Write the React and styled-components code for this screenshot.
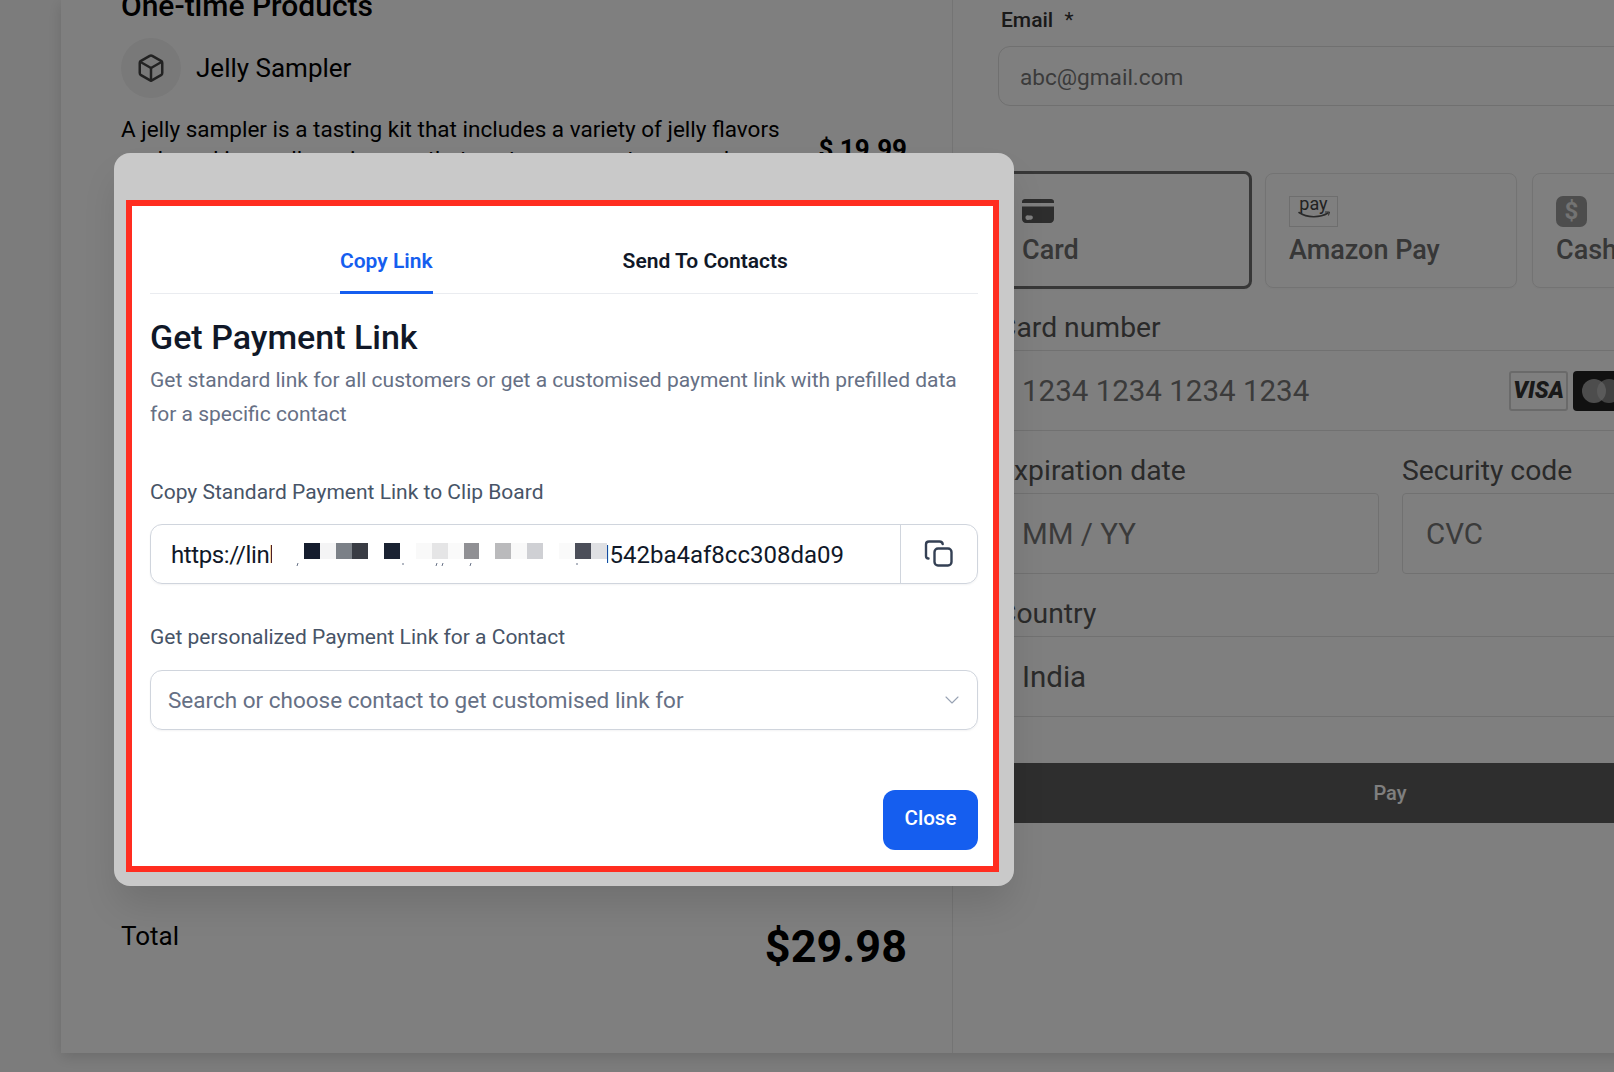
import styled, { createGlobalStyle } from 'styled-components'
import { Box, ChevronDown } from 'lucide-react'

const MOSAIC = [
	'#151d2e', '#f4f4f5', '#7b8087', '#393c44', '#ffffff', '#1a2232', '#ffffff', '#f9f9f9', '#e5e5e6',
	'#fafafa', '#909094', '#ffffff', '#bababc', '#f9f9f9', '#cfd0d4', '#ffffff', '#fafafa', '#4b4e59', '#dfe0e3',
]

const App = () => (
	<>
		<GlobalStyle />
		<Page>
			<Sheet>
				<ProductsColumn>
					<SectionTitle>One-time Products</SectionTitle>
					<ProductRow>
						<ProductBadge><Box size={30} strokeWidth={2} /></ProductBadge>
						<ProductName>Jelly Sampler</ProductName>
					</ProductRow>
					<ProductBody>
						<ProductText>
							A jelly sampler is a tasting kit that includes a variety of jelly flavors
							packaged in small servings so that customers can try several new ones
						</ProductText>
						<ProductPrice>$ 19.99</ProductPrice>
					</ProductBody>
					<TotalRow>
						<TotalLabel>Total</TotalLabel>
						<TotalValue>$29.98</TotalValue>
					</TotalRow>
				</ProductsColumn>

				<CheckoutColumn>
					<EmailLabel>Email <Star>*</Star></EmailLabel>
					<EmailInput>abc@gmail.com</EmailInput>

					<MethodRow>
						<MethodCard $active>
							<CardIcon />
							<MethodName>Card</MethodName>
						</MethodCard>
						<MethodCard>
							<AmazonMark>
								<AmazonText>pay</AmazonText>
								<svg width="34" height="8" viewBox="0 0 34 8" fill="none">
									<path d="M2 1.5c8 5.5 21 5.5 29 .5" stroke="#555" strokeWidth="1.6" strokeLinecap="round" />
									<path d="M28 1h4.5l-1 3.5" stroke="#555" strokeWidth="1" />
								</svg>
							</AmazonMark>
							<MethodName>Amazon Pay</MethodName>
						</MethodCard>
						<MethodCard>
							<CashMark>$</CashMark>
							<MethodName>Cash</MethodName>
						</MethodCard>
					</MethodRow>

					<FieldLabel>Card number</FieldLabel>
					<StripeField>
						<FieldValue>1234 1234 1234 1234</FieldValue>
						<BrandRow>
							<VisaMark>VISA</VisaMark>
							<MasterMark>
								<svg width="60" height="40" viewBox="0 0 60 40">
									<circle cx="21" cy="20" r="12" fill="#c4c4c4" opacity="0.75" />
									<circle cx="36" cy="20" r="12" fill="#c4c4c4" opacity="0.6" />
								</svg>
							</MasterMark>
						</BrandRow>
					</StripeField>

					<SplitRow>
						<div>
							<FieldLabel>Expiration date</FieldLabel>
							<StripeField $boxed><FieldValue>MM / YY</FieldValue></StripeField>
						</div>
						<div>
							<FieldLabel>Security code</FieldLabel>
							<StripeField $boxed><FieldValue>CVC</FieldValue></StripeField>
						</div>
					</SplitRow>

					<FieldLabel>Country</FieldLabel>
					<StripeField><CountryValue>India</CountryValue></StripeField>

					<PayButton>Pay</PayButton>
				</CheckoutColumn>
			</Sheet>

			<Backdrop />

			<Modal>
				<Highlight>
					<Tabs>
						<Tab $active>Copy Link</Tab>
						<Tab>Send To Contacts</Tab>
					</Tabs>

					<Title>Get Payment Link</Title>
					<Description>
						Get standard link for all customers or get a customised payment link with prefilled data
						for a specific contact
					</Description>

					<LinkLabel>Copy Standard Payment Link to Clip Board</LinkLabel>
					<LinkField>
						<LinkText>
							<LinkHead>https://link</LinkHead>
							<span>l542ba4af8cc308da09</span>
						</LinkText>
						<LinkMask>
							<Mosaic>
								{MOSAIC.map((color, index) => <MosaicCell key={index} $color={color} />)}
							</Mosaic>
							<svg width="335" height="5" viewBox="0 0 335 5" stroke="#667085" strokeWidth="1">
								<path d="M26 1l-1 3M131 1v2M165 1l-1 3M171 1l-1 3M199 1l-1 3M305 1v2" />
							</svg>
						</LinkMask>
						<CopyButton>
							<svg width="32" height="32" viewBox="0 0 32 32" fill="none" stroke="#344054" strokeWidth="2.4" strokeLinecap="round">
								<rect x="11.5" y="10.5" width="17" height="17" rx="3.5" />
								<path d="M5.5 20.5C3.8 20.5 3 19.5 3 18V6.5C3 4.5 4 3.5 6 3.5h10.5c2 0 3 .8 3.2 2.6" />
							</svg>
						</CopyButton>
					</LinkField>

					<ContactLabel>Get personalized Payment Link for a Contact</ContactLabel>
					<ContactSelect>
						<span>Search or choose contact to get customised link for</span>
						<ChevronDown size={24} strokeWidth={1.1} color="#98a2b3" />
					</ContactSelect>

					<Footer>
						<CloseButton>Close</CloseButton>
					</Footer>
				</Highlight>
			</Modal>
		</Page>
	</>
)


export default App


const CardIcon = () => (
	<svg width="32" height="24" viewBox="0 0 32 24" fill="#5a5a5a">
		<path d="M3 0h26c1.7 0 3 1.2 3 2.6V4H0V2.6C0 1.2 1.3 0 3 0z" />
		<path d="M0 7.5h32V20c0 2.2-1.600 4-4 4H4c-2.400 0-4-1.800-4-4V7.500zm7 9a2.400 2.400 0 100 4.200h1a2.200 2.200 0 100-4.200H7z" fillRule="evenodd" />
	</svg>
)

const GlobalStyle = createGlobalStyle`
	* {
		box-sizing: border-box;
	}

	body {
		margin: 0;
		font-family: Roboto, "Liberation Sans", sans-serif;
	}
`

const Page = styled.div`
	position: relative;
	width: 1614px;
	height: 1072px;
	overflow: hidden;
	background: #f9f9f9;
`

const Sheet = styled.div`
	width: 1700px;
	height: 1053px;
	margin-left: 61px;
	display: flex;
	background: #ffffff;
	box-shadow: 0 4px 14px rgba(0, 0, 0, 0.14);
`

const ProductsColumn = styled.div`
	width: 892px;
	padding: 0 45px 0 60px;
	border-right: 1px solid #e8e8e8;
	display: flex;
	flex-direction: column;
	flex-shrink: 0;
`

const SectionTitle = styled.h2`
	margin: -10px 0 0;
	font-size: 30px;
	line-height: 32px;
	font-weight: 500;
	color: #000000;
`

const ProductRow = styled.div`
	margin-top: 16px;
	display: flex;
	align-items: center;
	gap: 15px;
`

const ProductBadge = styled.div`
	width: 60px;
	height: 60px;
	border-radius: 50%;
	background: #f2f2f2;
	color: #444444;
	display: flex;
	align-items: center;
	justify-content: center;
`

const ProductName = styled.span`
	font-size: 26px;
	color: #000000;
`

const ProductBody = styled.div`
	margin-top: 16px;
	display: flex;
	align-items: flex-start;
	justify-content: space-between;
`

const ProductText = styled.p`
	width: 670px;
	margin: 0;
	font-size: 22.5px;
	line-height: 30px;
	color: #000000;
`

const ProductPrice = styled.span`
	margin-top: 20px;
	font-size: 26px;
	line-height: 30px;
	font-weight: 700;
	color: #000000;
`

const TotalRow = styled.div`
	margin-top: 716px;
	display: flex;
	justify-content: space-between;
`

const TotalLabel = styled.span`
	font-size: 26px;
	line-height: 32px;
	color: #000000;
`

const TotalValue = styled.span`
	font-size: 45px;
	line-height: 54px;
	font-weight: 700;
	color: #000000;
`

const CheckoutColumn = styled.div`
	width: 784px;
	margin-left: 45px;
	padding-top: 7px;
	flex-shrink: 0;
`

const EmailLabel = styled.div`
	padding-left: 3px;
	font-size: 21px;
	line-height: 26px;
	font-weight: 500;
	color: #333333;
`

const Star = styled.span`
	margin-left: 6px;
	font-weight: 400;
`

const EmailInput = styled.div`
	height: 60px;
	margin-top: 13px;
	padding: 2px 0 0 21px;
	border: 1px solid #e0e0e0;
	border-radius: 12px;
	display: flex;
	align-items: center;
	font-size: 22.6px;
	color: #777777;
`

const MethodRow = styled.div`
	margin: 65px 0 -1px;
	display: flex;
	align-items: center;
	gap: 15px;
`

const MethodCard = styled.div`
	width: ${({ $active }) => ($active ? '254px' : '252px')};
	height: ${({ $active }) => ($active ? '118px' : '115px')};
	margin-right: ${({ $active }) => ($active ? '-2px' : '0')};
	padding: ${({ $active }) => ($active ? '25px 21px' : '22px 23px')};
	border: ${({ $active }) => ($active ? '3px solid #6e6e6e' : '1px solid #e6e6e6')};
	border-radius: 8px;
	flex-shrink: 0;
	box-shadow: 0 1px 2px rgba(0, 0, 0, 0.03);
`

const MethodName = styled.div`
	margin-top: 6px;
	font-size: 27px;
	line-height: 34px;
	font-weight: 500;
	color: #6e6e6e;
`

const AmazonMark = styled.div`
	width: 49px;
	height: 31px;
	border: 1px solid #dddddd;
	display: flex;
	flex-direction: column;
	align-items: center;
`

const AmazonText = styled.span`
	font-size: 18px;
	line-height: 14px;
	color: #444444;
`

const CashMark = styled.div`
	width: 31px;
	height: 31px;
	border-radius: 7px;
	background: #9a9a9a;
	color: #e6e6e6;
	display: flex;
	align-items: center;
	justify-content: center;
	font-size: 24px;
	font-weight: 700;
`

const FieldLabel = styled.div`
	margin-top: 22px;
	font-size: 28.3px;
	line-height: 36px;
	color: #555555;
`

const StripeField = styled.div`
	height: 81px;
	margin-top: 4px;
	padding: 0 24px 0 ${({ $boxed }) => ($boxed ? '23px' : '24px')};
	border-top: 1px solid #e2e2e2;
	border-bottom: 1px solid #e2e2e2;
	border-left: ${({ $boxed }) => ($boxed ? '1px solid #e2e2e2' : 'none')};
	border-right: ${({ $boxed }) => ($boxed ? '1px solid #e2e2e2' : 'none')};
	border-radius: ${({ $boxed }) => ($boxed ? '4px' : '0')};
	display: flex;
	align-items: center;
	justify-content: space-between;
	font-size: 29.5px;
`

const FieldValue = styled.span`
	color: #777777;
`

const CountryValue = styled.span`
	color: #555555;
`

const BrandRow = styled.div`
	display: flex;
	gap: 5px;
	margin-right: 125px;
`

const VisaMark = styled.div`
	width: 59px;
	height: 40px;
	border: 2px solid #d4d4d4;
	border-radius: 3px;
	display: flex;
	align-items: center;
	justify-content: center;
	font-size: 23px;
	font-weight: 900;
	font-style: italic;
	color: #333333;
`

const MasterMark = styled.div`
	width: 60px;
	height: 40px;
	border-radius: 4px;
	background: #222222;
	display: flex;
`

const SplitRow = styled.div`
	display: grid;
	grid-template-columns: 381px 381px;
	gap: 23px;
`

const PayButton = styled.div`
	height: 60px;
	margin-top: 46px;
	background: #5c5c5c;
	display: flex;
	align-items: center;
	justify-content: center;
	font-size: 20px;
	font-weight: 500;
	color: #ffffff;
`

const Backdrop = styled.div`
	position: absolute;
	inset: 0;
	background: rgba(0, 0, 0, 0.5);
`

const Modal = styled.div`
	position: absolute;
	left: 114px;
	top: 153px;
	width: 900px;
	height: 733px;
	padding: 47px 15px 14px 12px;
	border-radius: 16px;
	background: #c9c9c9;
	box-shadow: 0 22px 36px -4px rgba(0, 0, 0, 0.12);
`

const Highlight = styled.div`
	height: 100%;
	padding: 0 15px 0 18px;
	border: 6px solid #ff2d20;
	background: #ffffff;
	display: flex;
	flex-direction: column;
`

const Tabs = styled.div`
	height: 88px;
	padding: 0 0 0 190px;
	border-bottom: 1px solid #eaecf0;
	display: flex;
	gap: 190px;
	flex-shrink: 0;
`

const Tab = styled.div`
	height: 88px;
	padding-top: 39px;
	border-bottom: ${({ $active }) => ($active ? '3px solid #155eef' : 'none')};
	font-size: 21px;
	line-height: 32px;
	font-weight: 600;
	color: ${({ $active }) => ($active ? '#155eef' : '#101828')};
`

const Title = styled.h2`
	margin: 21px 0 0;
	font-size: 34px;
	line-height: 44px;
	font-weight: 500;
	color: #101828;
`

const Description = styled.p`
	margin: 4px 0 0;
	font-size: 21px;
	line-height: 34px;
	color: #667085;
`

const LinkLabel = styled.div`
	margin-top: 47px;
	font-size: 21px;
	line-height: 28px;
	color: #475467;
`

const LinkField = styled.div`
	position: relative;
	height: 60px;
	margin-top: 18px;
	border: 1px solid #d0d5dd;
	border-radius: 12px;
	display: flex;
	box-shadow: 0 1px 2px rgba(16, 24, 40, 0.05);
`

const LinkText = styled.div`
	width: 749px;
	padding: 0 56px 0 20px;
	display: flex;
	justify-content: space-between;
	white-space: nowrap;
	font-size: 24px;
	line-height: 60px;
	color: #101828;
`

const LinkHead = styled.span`
	letter-spacing: -0.4px;
`

const LinkMask = styled.div`
	position: absolute;
	left: 121px;
	top: 8px;
	width: 335px;
	height: 40px;
	padding-top: 10px;
	background: #ffffff;
	display: flex;
	flex-direction: column;
	gap: 3px;
`

const Mosaic = styled.div`
	display: flex;
	height: 16px;
	padding-left: 32px;
`

const MosaicCell = styled.span`
	width: 16px;
	background: ${({ $color }) => $color};
`

const CopyButton = styled.div`
	flex: 1;
	border-left: 1px solid #d0d5dd;
	display: flex;
	align-items: center;
	justify-content: center;
`

const ContactLabel = styled.div`
	margin-top: 39px;
	font-size: 21px;
	line-height: 28px;
	color: #475467;
`

const ContactSelect = styled.div`
	height: 60px;
	margin-top: 19px;
	padding: 0 13px 0 17px;
	border: 1px solid #d0d5dd;
	border-radius: 12px;
	display: flex;
	align-items: center;
	justify-content: space-between;
	font-size: 22.5px;
	color: #667085;
	box-shadow: 0 1px 2px rgba(16, 24, 40, 0.05);
`

const Footer = styled.div`
	margin-top: 60px;
	display: flex;
	justify-content: flex-end;
`

const CloseButton = styled.div`
	width: 95px;
	height: 60px;
	padding-bottom: 4px;
	border-radius: 12px;
	background: #155eef;
	display: flex;
	align-items: center;
	justify-content: center;
	font-size: 20.6px;
	font-weight: 500;
	color: #ffffff;
`
